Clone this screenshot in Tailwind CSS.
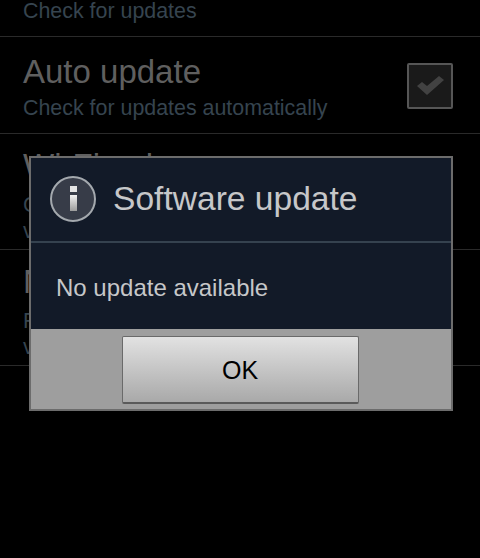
<!DOCTYPE html>
<html lang="en">
<head>
<meta charset="UTF-8">
<title>Software update</title>
<script src="https://cdn.jsdelivr.net/npm/@tailwindcss/browser@4"></script>
</head>
<body class="bg-black">
<div class="relative w-[480px] h-[558px] overflow-hidden bg-black font-['Liberation_Sans',sans-serif]">

    <!-- settings list behind the dialog -->
    <div class="flex h-[37px] items-end border-b border-[#2a2a2a] px-[23px] pb-[13px]">
        <p class="text-[21.4px] leading-[24px] text-[#36444f]">Check for updates</p>
    </div>
    <div class="flex h-[97px] items-center justify-between border-b border-[#2a2a2a] pl-[23px] pr-[27px]">
        <div class="pt-[2px]">
            <p class="text-[33px] leading-[38px] text-[#5f5f5f]">Auto update</p>
            <p class="mt-[5px] text-[21.4px] leading-[24px] text-[#36444f]">Check for updates automatically</p>
        </div>
        <div class="mt-[1px] flex h-[46px] w-[46px] items-center justify-center rounded-[2px] border-2 border-[#565656] bg-[#1a1a1a]">
            <svg class="h-[30px] w-[30px]" viewBox="0 0 30 30"><path d="M2 15l5-4 5 4L24 5l5 4-17 15z" fill="#424242"/></svg>
        </div>
    </div>
    <div class="h-[116px] border-b border-[#2a2a2a] px-[23px] pt-[13px]">
        <p class="text-[33px] leading-[38px] text-[#5f5f5f]">Wi-Fi only</p>
        <p class="mt-[7px] text-[21.4px] leading-[26px] text-[#36444f]">Check for updates</p>
        <p class="text-[21.4px] leading-[26px] text-[#36444f]">via Wi-Fi only</p>
    </div>
    <div class="h-[116px] border-b border-[#2a2a2a] px-[23px] pt-[13px]">
        <p class="text-[33px] leading-[38px] text-[#5f5f5f]">Notifications</p>
        <p class="mt-[7px] text-[21.4px] leading-[26px] text-[#36444f]">Receive update alerts</p>
        <p class="text-[21.4px] leading-[26px] text-[#36444f]">via notification bar</p>
    </div>

    <!-- dialog -->
    <div class="absolute left-[29px] top-[156px] w-[424px] border-2 border-[#6c6c6c]">
        <div class="flex h-[85px] items-center gap-[17px] border-b-2 border-[#35424f] bg-[#121a28] pb-[2px] pl-[19px]">
            <div class="flex h-[46px] w-[46px] flex-col items-center justify-center gap-[3px] rounded-full border-2 border-[#a4a9ae] bg-[#373c48]">
                <span class="h-[6px] w-[7px] bg-[#e4e4e4]"></span>
                <span class="h-[16px] w-[7px] bg-gradient-to-b from-[#f2f2f2] to-[#9c9c9c]"></span>
            </div>
            <p class="text-[33.6px] leading-[40px] text-[#c6c7c9]">Software update</p>
        </div>
        <div class="flex h-[86px] items-center bg-[#121a28] pl-[25px] pt-[4px]">
            <p class="text-[24px] leading-[28px] text-[#c6c7c9]">No update available</p>
        </div>
        <div class="flex h-[80px] justify-center bg-[#9e9e9e] pr-[2px] pt-[7px]">
            <button class="flex h-[68px] w-[237px] items-center justify-center rounded-[2px] border border-[#6a6a6a] border-b-2 border-b-[#5a5a5a] bg-gradient-to-b from-[#e2e2e2] to-[#a9a9a9] pt-[2px] text-[25px] text-black">OK</button>
        </div>
    </div>
</div>
</body>
</html>
